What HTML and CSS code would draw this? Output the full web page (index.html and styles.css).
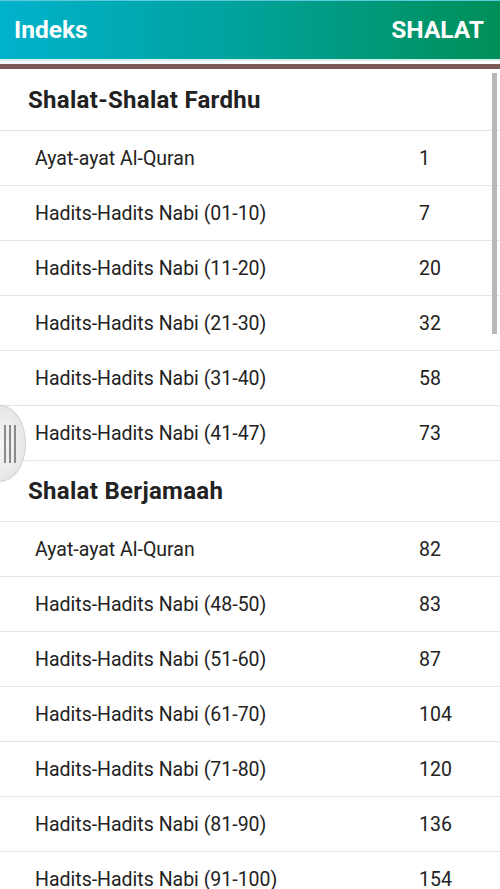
FILE: index.html
```html
<!DOCTYPE html>
<html lang="id">
<head>
    <meta charset="UTF-8">
    <title>Indeks Shalat</title>
    <link rel="stylesheet" href="styles.css">
</head>
<body>
    <div class="topbar">
        <span class="title">Indeks</span>
        <span class="book">SHALAT</span>
    </div>
    <div class="topbar-line"></div>

    <div class="index-list">
        <div class="section">Shalat-Shalat Fardhu</div>
        <div class="row"><span class="name">Ayat-ayat Al-Quran</span><span class="page">1</span></div>
        <div class="row"><span class="name">Hadits-Hadits Nabi (01-10)</span><span class="page">7</span></div>
        <div class="row"><span class="name">Hadits-Hadits Nabi (11-20)</span><span class="page">20</span></div>
        <div class="row"><span class="name">Hadits-Hadits Nabi (21-30)</span><span class="page">32</span></div>
        <div class="row"><span class="name">Hadits-Hadits Nabi (31-40)</span><span class="page">58</span></div>
        <div class="row"><span class="name">Hadits-Hadits Nabi (41-47)</span><span class="page">73</span></div>

        <div class="section">Shalat Berjamaah</div>
        <div class="row"><span class="name">Ayat-ayat Al-Quran</span><span class="page">82</span></div>
        <div class="row"><span class="name">Hadits-Hadits Nabi (48-50)</span><span class="page">83</span></div>
        <div class="row"><span class="name">Hadits-Hadits Nabi (51-60)</span><span class="page">87</span></div>
        <div class="row"><span class="name">Hadits-Hadits Nabi (61-70)</span><span class="page">104</span></div>
        <div class="row"><span class="name">Hadits-Hadits Nabi (71-80)</span><span class="page">120</span></div>
        <div class="row"><span class="name">Hadits-Hadits Nabi (81-90)</span><span class="page">136</span></div>
        <div class="row"><span class="name">Hadits-Hadits Nabi (91-100)</span><span class="page">154</span></div>

        <!-- scrollbar + drawer handle sit over the list -->
        <div class="scroll-thumb"></div>
        <div class="drawer-handle"><i></i><i></i><i></i></div>
    </div>
</body>
</html>
```

FILE: styles.css
```css
body {
    margin: 0;
    background-color: #fff;
    font-family: Roboto, "Noto Sans", sans-serif;
    color: #222;
    overflow: hidden;
}
.topbar {
    height: 59px;
    display: flex;
    align-items: center;
    justify-content: space-between;
    padding: 0 16px 2px 14px;
    background: linear-gradient(to right, #00b2cc, #00a39f 45%, #008f58);
    border-top: 1px solid #5cc9dc;
    box-sizing: border-box;
    color: #fff;
    font-weight: bold;
    font-size: 24.5px;
}
.topbar-line {
    height: 2px;
    background-color: #d6eeea;
    border-bottom: 3px solid #fff;
    margin-bottom: 5px;
    box-shadow: 0 5px 0 #7b5a55;
}
.index-list {
    position: relative;
}
.section {
    height: 62px;
    display: flex;
    align-items: center;
    padding-left: 28px;
    font-size: 24px;
    font-weight: bold;
    letter-spacing: 0.3px;
    border-bottom: 1px solid #e4e4e4;
    box-sizing: border-box;
}
.index-list .section + .row ~ .section {
    height: 61px;
}
.row {
    height: 55px;
    display: flex;
    align-items: center;
    padding-left: 35px;
    font-size: 19.5px;
    border-bottom: 1px solid #e4e4e4;
    box-sizing: border-box;
}
.row .name {
    width: 384px;
}
.scroll-thumb {
    position: absolute;
    top: 4px;
    right: 3px;
    width: 5px;
    height: 261px;
    background-color: #b8b8b8;
}
.drawer-handle {
    position: absolute;
    top: 336px;
    left: -26px;
    width: 52px;
    height: 77px;
    border-radius: 50%;
    background: radial-gradient(circle at 30% 50%, #fafafa, #e8e8e8 70%, #d8d8d8);
    border: 1px solid #d0d0d0;
    box-sizing: border-box;
    display: flex;
    justify-content: flex-end;
    align-items: center;
    gap: 2.5px;
    padding-right: 9px;
}
.drawer-handle i {
    width: 2.5px;
    height: 38px;
    background-color: #8a8a8a;
}
```
